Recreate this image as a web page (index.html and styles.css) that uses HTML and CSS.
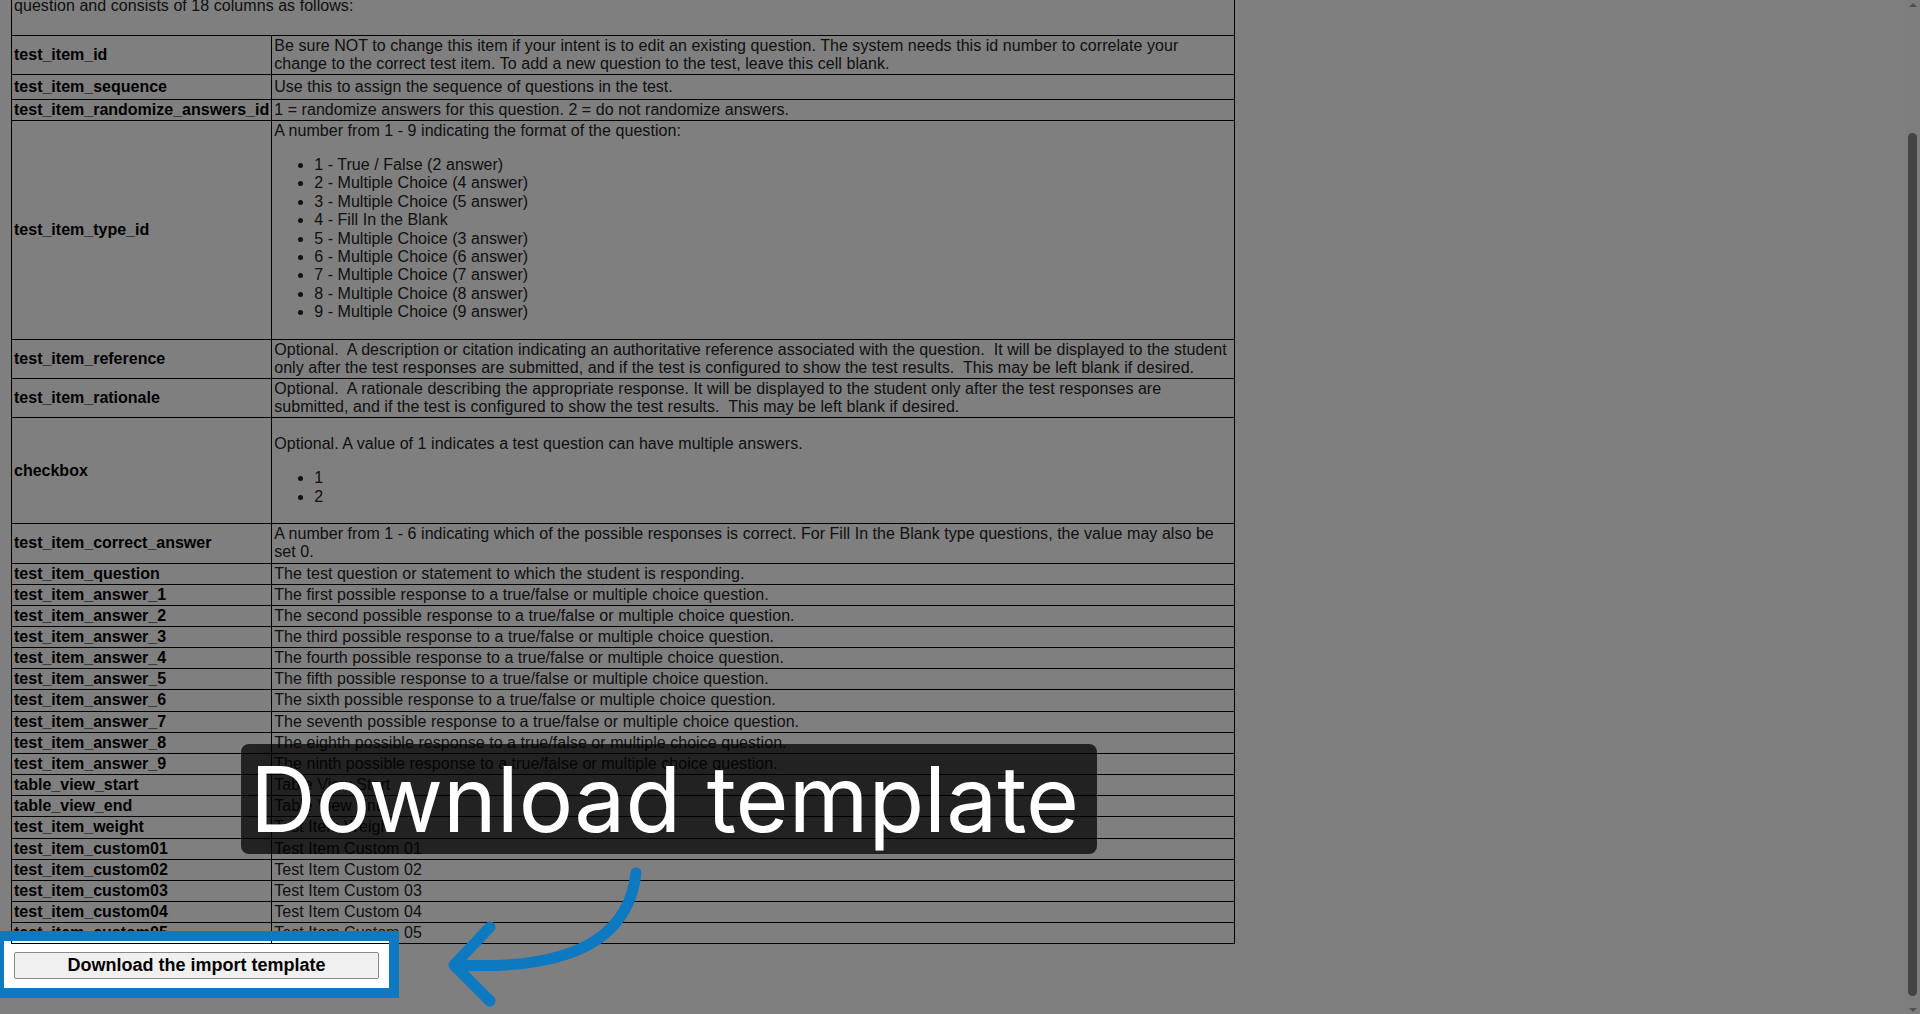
FILE: index.html
```html
<!DOCTYPE html>
<html lang="en">
<head>
<meta charset="utf-8">
<title>Import test items</title>
<link rel="stylesheet" href="styles.css">
</head>
<body>
<div class="screen">
  <main class="viewport">
    <div class="page">
      <table class="cols">
        <tr><td colspan="2" class="intro-cell"><p class="intro">question and consists of 18 columns as follows:</p></td></tr>
        <tr><th>test_item_id</th><td>Be sure NOT to change this item if your intent is to edit an existing question. The system needs this id number to correlate your change to the correct test item. To add a new question to the test, leave this cell blank.</td></tr>
        <tr class="seq"><th>test_item_sequence</th><td>Use this to assign the sequence of questions in the test.</td></tr>
        <tr><th>test_item_randomize_answers_id</th><td>1 = randomize answers for this question. 2 = do not randomize answers.</td></tr>
        <tr><th>test_item_type_id</th><td>A number from 1 - 9 indicating the format of the question:
          <ul>
            <li>1 - True / False (2 answer)</li>
            <li>2 - Multiple Choice (4 answer)</li>
            <li>3 - Multiple Choice (5 answer)</li>
            <li>4 - Fill In the Blank</li>
            <li>5 - Multiple Choice (3 answer)</li>
            <li>6 - Multiple Choice (6 answer)</li>
            <li>7 - Multiple Choice (7 answer)</li>
            <li>8 - Multiple Choice (8 answer)</li>
            <li>9 - Multiple Choice (9 answer)</li>
          </ul></td></tr>
        <tr><th>test_item_reference</th><td>Optional.&nbsp; A description or citation indicating an authoritative reference associated with the question.&nbsp; It will be displayed to the student only after the test responses are submitted, and if the test is configured to show the test results.&nbsp; This may be left blank if desired.</td></tr>
        <tr><th>test_item_rationale</th><td>Optional.&nbsp; A rationale describing the appropriate response. It will be displayed to the student only after the test responses are submitted, and if the test is configured to show the test results.&nbsp; This may be left blank if desired.</td></tr>
        <tr><th>checkbox</th><td><p>Optional. A value of 1 indicates a test question can have multiple answers.</p>
          <ul>
            <li>1</li>
            <li>2</li>
          </ul></td></tr>
        <tr><th>test_item_correct_answer</th><td>A number from 1 - 6 indicating which of the possible responses is correct. For Fill In the Blank type questions, the value may also be set 0.</td></tr>
        <tr><th>test_item_question</th><td>The test question or statement to which the student is responding.</td></tr>
        <tr><th>test_item_answer_1</th><td>The first possible response to a true/false or multiple choice question.</td></tr>
        <tr><th>test_item_answer_2</th><td>The second possible response to a true/false or multiple choice question.</td></tr>
        <tr><th>test_item_answer_3</th><td>The third possible response to a true/false or multiple choice question.</td></tr>
        <tr><th>test_item_answer_4</th><td>The fourth possible response to a true/false or multiple choice question.</td></tr>
        <tr><th>test_item_answer_5</th><td>The fifth possible response to a true/false or multiple choice question.</td></tr>
        <tr><th>test_item_answer_6</th><td>The sixth possible response to a true/false or multiple choice question.</td></tr>
        <tr><th>test_item_answer_7</th><td>The seventh possible response to a true/false or multiple choice question.</td></tr>
        <tr><th>test_item_answer_8</th><td>The eighth possible response to a true/false or multiple choice question.</td></tr>
        <tr><th>test_item_answer_9</th><td>The ninth possible response to a true/false or multiple choice question.</td></tr>
        <tr><th>table_view_start</th><td>Table View Start</td></tr>
        <tr><th>table_view_end</th><td>Table View End</td></tr>
        <tr><th>test_item_weight</th><td>Test Item Weight</td></tr>
        <tr><th>test_item_custom01</th><td>Test Item Custom 01</td></tr>
        <tr><th>test_item_custom02</th><td>Test Item Custom 02</td></tr>
        <tr><th>test_item_custom03</th><td>Test Item Custom 03</td></tr>
        <tr><th>test_item_custom04</th><td>Test Item Custom 04</td></tr>
        <tr><th>test_item_custom05</th><td>Test Item Custom 05</td></tr>
      </table>
      <button class="dl-btn" type="button">Download the import template</button>
    </div>
  </main>
  <div class="scrollbar" aria-hidden="true">
    <span class="sb-btn"><span class="sb-arrow up"></span></span>
    <span class="sb-track"><span class="sb-thumb"></span></span>
    <span class="sb-btn"><span class="sb-arrow down"></span></span>
  </div>
  <div class="spotlight"></div>
  <div class="callout">Download template</div>
  <svg class="pointer" width="240" height="159" viewBox="430 855 240 159" aria-hidden="true">
    <path d="M636 873 C628 945 560 970 458 965" />
    <path d="M490 927 L454 965 L490 1001" />
  </svg>
</div>
</body>
</html>
```

FILE: styles.css
```css
* { box-sizing: border-box; }

html, body {
  margin: 0;
  padding: 0;
  height: 100%;
  overflow: hidden;
}

body {
  font-family: "Liberation Sans", Arial, sans-serif;
  font-size: 16px;
  color: #000;
  background: #fff;
}

.screen {
  position: relative;
  display: flex;
  width: 1920px;
  height: 1014px;
  overflow: hidden;
}

.viewport {
  flex: 1;
  overflow: hidden;
  background: #fff;
}

.page {
  margin-top: -5px;
  padding-left: 11px;
}

.cols {
  width: 1224px;
  border-collapse: collapse;
  border: 1px solid #000;
  line-height: 18.15px;
}

.cols th,
.cols td {
  border: 1px solid #000;
  padding: 1px 2px;
  vertical-align: middle;
  text-align: left;
}

.cols th {
  font-weight: bold;
  color: #000;
  white-space: nowrap;
}

.cols td {
  color: #222;
  letter-spacing: 0.05px;
}

.cols td ul {
  margin: 16px 0;
  padding-left: 40px;
  line-height: 18.4px;
}

.cols td p {
  margin: 16px 0;
}

.cols .intro {
  margin: 0 0 19px;
}

.cols .seq th,
.cols .seq td {
  padding-top: 3px;
  padding-bottom: 2px;
}

.dl-btn {
  display: block;
  margin: 8px 0 0 3px;
  width: 365px;
  height: 27px;
  padding: 0;
  font-family: "Liberation Sans", Arial, sans-serif;
  font-size: 18px;
  font-weight: bold;
  color: #000;
  background: #f0f0f0;
  border: 1px solid #8a8a8a;
  border-radius: 2px;
}

/* classic scrollbar */
.scrollbar {
  width: 15px;
  display: flex;
  flex-direction: column;
  background: #fafafa;
}

.sb-btn {
  height: 17px;
  display: flex;
  align-items: center;
  justify-content: center;
}

.sb-arrow {
  width: 0;
  height: 0;
  border-left: 4px solid transparent;
  border-right: 4px solid transparent;
}

.sb-arrow.up { border-bottom: 4px solid #a0a0a0; margin-top: -8px; }
.sb-arrow.down { border-top: 4px solid #a0a0a0; margin-top: 8px; }

.sb-track {
  flex: 1;
  display: flex;
  justify-content: center;
  padding-top: 116px;
  padding-bottom: 1px;
}

.sb-thumb {
  width: 9px;
  height: 100%;
  border-radius: 5px;
  background: #888;
}

/* tutorial overlay */
.spotlight {
  position: absolute;
  left: -6px;
  top: 931px;
  width: 405px;
  height: 67px;
  border: 10px solid #0c79c0;
  box-shadow: 0 0 0 4000px rgba(0, 0, 0, 0.5);
  z-index: 5;
}

.callout {
  position: absolute;
  left: 241px;
  top: 744px;
  width: 856px;
  height: 110px;
  padding: 0 0 0 9px;
  background: rgba(0, 0, 0, 0.73);
  border-radius: 8px;
  color: #fff;
  font-family: Inter, "Noto Sans", sans-serif;
  font-size: 91px;
  line-height: 110px;
  white-space: nowrap;
  z-index: 6;
}

.pointer {
  position: absolute;
  left: 430px;
  top: 855px;
  z-index: 6;
  fill: none;
  stroke: #0c79c0;
  stroke-width: 11;
  stroke-linecap: round;
  stroke-linejoin: round;
}
```
